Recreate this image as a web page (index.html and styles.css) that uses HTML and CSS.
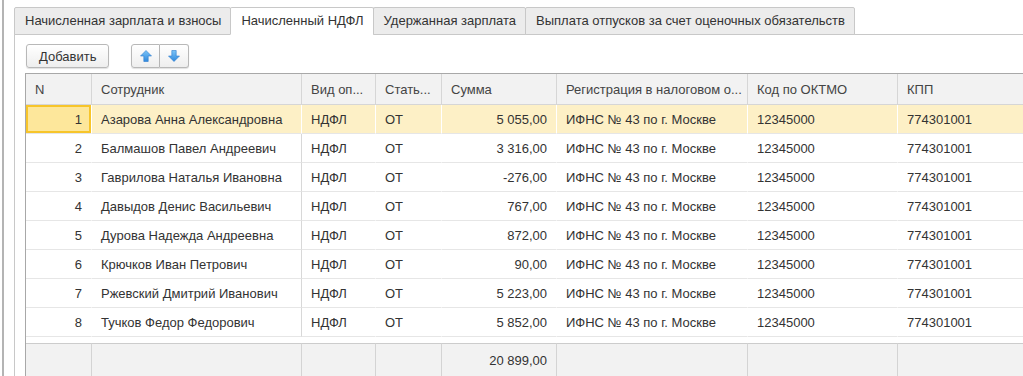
FILE: index.html
```html
<!DOCTYPE html>
<html lang="ru">
<head>
    <meta charset="UTF-8">
    <title>Начисленный НДФЛ</title>
    <link rel="stylesheet" href="styles.css">
</head>
<body>
<div class="window">
    <div class="tabs">
        <div class="tab">Начисленная зарплата и взносы</div>
        <div class="tab active">Начисленный НДФЛ</div>
        <div class="tab">Удержанная зарплата</div>
        <div class="tab">Выплата отпусков за счет оценочных обязательств</div>
    </div>
    <div class="panel">
        <div class="toolbar">
            <button class="btn">Добавить</button>
            <div class="btn-group">
                <button class="btn icon">
                    <svg width="12" height="12" viewBox="0 0 12 12"><defs><linearGradient id="gu" x1="0" y1="0" x2="0" y2="1"><stop offset="0" stop-color="#7cc4f7"/><stop offset="1" stop-color="#2f88dc"/></linearGradient></defs><polygon points="6,0.5 11.5,6 8.2,6 8.2,11.5 3.8,11.5 3.8,6 0.5,6" fill="url(#gu)" stroke="#2c7cd0" stroke-width="0.6"/></svg>
                </button>
                <button class="btn icon">
                    <svg width="12" height="12" viewBox="0 0 12 12"><defs><linearGradient id="gd" x1="0" y1="0" x2="0" y2="1"><stop offset="0" stop-color="#7cc4f7"/><stop offset="1" stop-color="#2f88dc"/></linearGradient></defs><polygon points="6,11.5 11.5,6 8.2,6 8.2,0.5 3.8,0.5 3.8,6 0.5,6" fill="url(#gd)" stroke="#2c7cd0" stroke-width="0.6"/></svg>
                </button>
            </div>
        </div>

        <table class="grid">
            <colgroup>
                <col style="width:66px">
                <col style="width:210px">
                <col style="width:74px">
                <col style="width:66px">
                <col style="width:115px">
                <col style="width:191px">
                <col style="width:150px">
                <col style="width:160px">
            </colgroup>
            <thead>
                <tr>
                    <th>N</th>
                    <th>Сотрудник</th>
                    <th>Вид оп...</th>
                    <th>Стать...</th>
                    <th>Сумма</th>
                    <th>Регистрация в налоговом о...</th>
                    <th>Код по ОКТМО</th>
                    <th>КПП</th>
                </tr>
            </thead>
            <tbody>
                <tr class="current">
                    <td class="num selected">1</td><td class="name">Азарова Анна Александровна</td><td>НДФЛ</td><td>ОТ</td><td class="num">5 055,00</td><td>ИФНС № 43 по г. Москве</td><td>12345000</td><td>774301001</td>
                </tr>
                <tr>
                    <td class="num">2</td><td class="name">Балмашов Павел Андреевич</td><td>НДФЛ</td><td>ОТ</td><td class="num">3 316,00</td><td>ИФНС № 43 по г. Москве</td><td>12345000</td><td>774301001</td>
                </tr>
                <tr>
                    <td class="num">3</td><td class="name">Гаврилова Наталья Ивановна</td><td>НДФЛ</td><td>ОТ</td><td class="num">-276,00</td><td>ИФНС № 43 по г. Москве</td><td>12345000</td><td>774301001</td>
                </tr>
                <tr>
                    <td class="num">4</td><td class="name">Давыдов Денис Васильевич</td><td>НДФЛ</td><td>ОТ</td><td class="num">767,00</td><td>ИФНС № 43 по г. Москве</td><td>12345000</td><td>774301001</td>
                </tr>
                <tr>
                    <td class="num">5</td><td class="name">Дурова Надежда Андреевна</td><td>НДФЛ</td><td>ОТ</td><td class="num">872,00</td><td>ИФНС № 43 по г. Москве</td><td>12345000</td><td>774301001</td>
                </tr>
                <tr>
                    <td class="num">6</td><td class="name">Крючков Иван Петрович</td><td>НДФЛ</td><td>ОТ</td><td class="num">90,00</td><td>ИФНС № 43 по г. Москве</td><td>12345000</td><td>774301001</td>
                </tr>
                <tr>
                    <td class="num">7</td><td class="name">Ржевский Дмитрий Иванович</td><td>НДФЛ</td><td>ОТ</td><td class="num">5 223,00</td><td>ИФНС № 43 по г. Москве</td><td>12345000</td><td>774301001</td>
                </tr>
                <tr>
                    <td class="num">8</td><td class="name">Тучков Федор Федорович</td><td>НДФЛ</td><td>ОТ</td><td class="num">5 852,00</td><td>ИФНС № 43 по г. Москве</td><td>12345000</td><td>774301001</td>
                </tr>
                <tr class="spacer"><td colspan="8"></td></tr>
            </tbody>
            <tfoot>
                <tr>
                    <td></td><td></td><td></td><td></td><td class="num">20 899,00</td><td></td><td></td><td></td>
                </tr>
            </tfoot>
        </table>
    </div>
</div>
</body>
</html>
```

FILE: styles.css
```css
html, body {
    margin: 0;
    padding: 0;
    height: 100%;
    overflow: hidden;
    background-color: #ffffff;
}
body {
    font-family: 'Liberation Sans', Arial, sans-serif;
    font-size: 13px;
    color: #333333;
}
.window {
    height: 100%;
    margin-left: 2px;
    border-left: 2px solid #b4b4b4;
    padding: 7px 0 0 10px;
    box-sizing: border-box;
    display: flex;
    flex-direction: column;
}
.tabs {
    display: flex;
    border-bottom: 1px solid #c8c8c8;
}
.tab {
    height: 26px;
    line-height: 26px;
    padding: 0 9px 0 10px;
    background-color: #ececec;
    border: 1px solid #c8c8c8;
    margin-bottom: -1px;
    margin-left: -1px;
    border-radius: 2px 2px 0 0;
    white-space: nowrap;
}
.tab:first-child {
    margin-left: 0;
}
.tab.active {
    background-color: #ffffff;
    border-bottom-color: #ffffff;
}
.panel {
    flex-grow: 1;
    border-left: 1px solid #c8c8c8;
    padding: 9px 0 0 10px;
    overflow: hidden;
}
.toolbar {
    display: flex;
    gap: 22px;
    padding-left: 1px;
    margin-bottom: 5px;
}
.btn {
    font-family: inherit;
    font-size: 13px;
    color: #333333;
    height: 24px;
    padding: 0 12px;
    border: 1px solid #b8b8b8;
    border-radius: 3px;
    background: linear-gradient(#ffffff, #eeeeee);
    box-shadow: 0 1px 1px rgba(0, 0, 0, 0.12);
    cursor: pointer;
}
.btn-group {
    display: flex;
}
.btn.icon {
    width: 29px;
    padding: 0;
    display: flex;
    align-items: center;
    justify-content: center;
}
.btn-group .btn:first-child {
    border-radius: 3px 0 0 3px;
}
.btn-group .btn:last-child {
    border-radius: 0 3px 3px 0;
    border-left: none;
}
.grid {
    table-layout: fixed;
    border-collapse: separate;
    border-spacing: 0;
    width: 1033px;
    border-top: 1px solid #a8a8a8;
    border-left: 1px solid #a8a8a8;
}
.grid th,
.grid td {
    padding: 0 9px;
    white-space: nowrap;
    overflow: hidden;
    text-align: left;
    font-weight: normal;
    border-right: 1px solid transparent;
}
.grid th {
    height: 31px;
    background-color: #f2f2f2;
    color: #444444;
    border-bottom: 1px solid #d6d6d6;
    border-right: 1px solid #d6d6d6;
    box-sizing: border-box;
}
.grid tbody td {
    height: 29px;
    box-sizing: border-box;
    border-bottom: 1px solid #e6e6e6;
}
.grid td.num {
    text-align: right;
}
.grid tbody td.name {
    border-right-color: #d8d8d8;
}
.grid tr.current td {
    background-color: #fdf0c6;
    border-right-color: #ffffff;
}
.grid tr.current td.selected {
    background-color: #fde79b;
    box-shadow: inset 0 0 0 2px #f7c52a;
}
.grid tr.spacer td {
    height: 6px;
    border: none;
}
.grid tfoot td {
    height: 34px;
    background-color: #f2f2f2;
    border-top: 1px solid #cccccc;
    border-right: 1px solid #d4d4d4;
    box-sizing: border-box;
}
```
